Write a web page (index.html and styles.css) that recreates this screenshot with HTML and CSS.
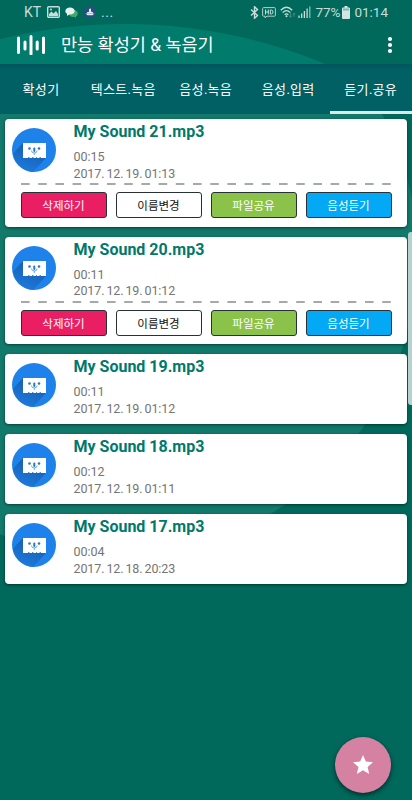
FILE: index.html
```html
<!DOCTYPE html>
<html lang="ko">
<head>
  <meta charset="UTF-8">
  <meta name="viewport" content="width=device-width, initial-scale=1.0">
  <title>만능 확성기 &amp; 녹음기</title>
  <link rel="stylesheet" href="styles.css">
</head>
<body>
  <header class="top">
    <div class="status">
      <span class="carrier">KT</span>
      <svg class="st-photo" width="13" height="12" viewBox="0 0 13 12"><rect x=".7" y=".7" width="11.6" height="10.6" rx="1" fill="none" stroke="#c6ddd9" stroke-width="1.4"/><path d="M2 10V8l2.5-2.5 2 2L9 5l2 3v2z" fill="#c6ddd9"/><circle cx="4" cy="3.4" r="1" fill="#c6ddd9"/></svg>
      <svg class="st-chat" width="13" height="11" viewBox="0 0 13 11"><ellipse cx="8.5" cy="6.5" rx="4.2" ry="3.5" fill="#45a968"/><path d="M9 9l2 2 0-3z" fill="#45a968"/><ellipse cx="5" cy="4" rx="4.7" ry="3.6" fill="#e6f2ed"/><path d="M2 6l0 3 3-2z" fill="#e6f2ed"/></svg>
      <svg class="st-hat" width="12" height="12" viewBox="0 0 12 12"><circle cx="6" cy="6" r="6" fill="#284e7c"/><path d="M5 3l2-.5v3l2 .8v1H3v-1l2-.6zM1.500 7.500h9l-2 1.700h-5z" fill="#dce9ee"/></svg>
      <span class="dots">...</span>
      <div class="status-right">
        <svg class="st-bt" width="9" height="13" viewBox="0 0 9 13"><path d="M1 3.5l6.500 6-3 2.800V.7l3 2.800L1 9.500" fill="none" stroke="#c6ddd9" stroke-width="1.400"/></svg>
        <svg class="st-hd" width="14" height="11" viewBox="0 0 14 11"><path d="M3 9.2H1.6Q.6 9.2.6 8.2V1.6Q.6.6 1.6.6h10.8q1 0 1 1v6.6q0 1-1 1H5L3 10.7z" fill="none" stroke="#b1d0ca"/><path d="M3.5 2.5v5M6.3 2.5v5M3.5 5h2.8M8.3 3v4h1q1.7 0 1.7-2T9.3 3z" fill="none" stroke="#c6ddd9"/></svg>
        <svg class="st-wifi" width="16" height="13" viewBox="0 0 16 13"><path d="M.8 4.3Q6.5-1.8 12.2 4.3M2.7 6.6q3.8-4 7.6 0M4.7 8.7q1.8-1.8 3.6 0" fill="none" stroke="#c6ddd9" stroke-width="1.3"/><circle cx="6.5" cy="10.3" r="1" fill="#c6ddd9"/><path d="M10.5 7v4M9 9.5l1.5 2 1.5-2M14 11V7M12.8 8.5L14 7l1.2 1.5" fill="none" stroke="#4a9287" stroke-width=".8"/></svg>
        <svg class="st-signal" width="13" height="12" viewBox="0 0 13 12"><path d="M1 9.5V12M3.7 7.5V12M6.4 5V12M9.1 2.5V12" stroke="#c6ddd9" stroke-width="1.3"/><path d="M11.800 .5V12" stroke="#91bab3" stroke-width="1.3"/></svg>
        <span class="percent">77%</span>
        <svg class="st-bat" width="8" height="13" viewBox="0 0 8 13"><path d="M2.5 0h3v1.5H7q1 0 1 1V12q0 1-1 1H1q-1 0-1-1V2.5q0-1 1-1h1.5z" fill="#d2e5e2"/><path d="M1 2.5h6v2H1z" fill="#87b5ad"/></svg>
        <span class="clock">01:14</span>
      </div>
    </div>
    <div class="toolbar">
      <svg class="logo" width="30" height="20" viewBox="0 0 30 20"><path d="M1.500 3v14.500M8 7v7M14 1.500v17.500M20.200 7v7M26.500 3v14.500" stroke="#fff" stroke-width="3" stroke-linecap="round"/></svg>
      <h1>만능 확성기 &amp; 녹음기</h1>
      <svg class="menu" width="6" height="18" viewBox="0 0 6 18"><circle cx="3" cy="3" r="2.1" fill="#fff"/><circle cx="3" cy="9" r="2.1" fill="#fff"/><circle cx="3" cy="15" r="2.1" fill="#fff"/></svg>
    </div>
  </header>

  <nav class="tabs">
    <a class="tab">확성기</a>
    <a class="tab">텍스트.녹음</a>
    <a class="tab">음성.녹음</a>
    <a class="tab">음성.입력</a>
    <a class="tab active">듣기.공유</a>
  </nav>

  <main id="soundList"></main>

  <div class="scrollbar"></div>
  <button class="fab" aria-label="favorite">
    <svg width="20" height="20" viewBox="2 2 20 20"><path fill="#fff" d="M12 17.3l6.2 3.7-1.6-7L22 9.2l-7.2-.6L12 2 9.2 8.6 2 9.2 7.5 14l-1.7 7z"/></svg>
  </button>

  <!-- long shadow of the cassette, shared by all discs -->
  <svg class="defs" width="0" height="0">
    <linearGradient id="longShadow" gradientUnits="userSpaceOnUse" x1="20" y1="22" x2="12" y2="41">
      <stop offset="0" stop-color="#1862b4"/>
      <stop offset="1" stop-color="#1c78da"/>
    </linearGradient>
  </svg>

  <template id="cardTemplate">
    <article class="card">
      <div class="info">
        <svg class="disc" width="44" height="44" viewBox="0 0 44 44">
          <circle cx="22" cy="22" r="22" fill="#1e82ea"/>
          <path d="M11 15L1 25.500A22 22 0 0 0 21 44L34 30z" fill="url(#longShadow)"/>
          <rect x="11" y="15" width="23" height="15" fill="#fff"/>
          <circle cx="17.500" cy="20.500" r="1.300" fill="#2878bd"/><circle cx="27" cy="20.500" r="1.300" fill="#2878bd"/>
          <rect x="21.300" y="19.500" width="2" height="4.500" rx="1" fill="#2878bd"/>
          <path d="M19.500 22.500q0 2.500 2.800 2.500t2.800-2.500M22.300 25v2" fill="none" stroke="#4e98d8" stroke-width=".8"/>
          <path d="M16 29.500h1.500M20 29.500h1.500M24 29.500h1M27.500 29.500h1.500" stroke="#2878bd" stroke-width=".8"/>
        </svg>
        <div class="text">
          <h2></h2>
          <p class="length"></p>
          <p class="date"></p>
        </div>
      </div>
    </article>
  </template>

  <template id="actionsTemplate">
    <svg class="dashes" width="370" height="2"><path d="M0 1h370" stroke="#858f8c" stroke-width="1.300" stroke-dasharray="8.600 8.600"/></svg>
    <div class="actions">
      <button class="delete">삭제하기</button>
      <button class="rename">이름변경</button>
      <button class="share">파일공유</button>
      <button class="listen">음성듣기</button>
    </div>
  </template>

  <script>
    const sounds = [
      { name: 'My Sound 21.mp3', length: '00:15', date: '2017. 12. 19. 01:13', open: true },
      { name: 'My Sound 20.mp3', length: '00:11', date: '2017. 12. 19. 01:12', open: true },
      { name: 'My Sound 19.mp3', length: '00:11', date: '2017. 12. 19. 01:12' },
      { name: 'My Sound 18.mp3', length: '00:12', date: '2017. 12. 19. 01:11' },
      { name: 'My Sound 17.mp3', length: '00:04', date: '2017. 12. 18. 20:23' }
    ];

    // Build one card per recording, open cards also get the buttons
    const list = document.getElementById('soundList');
    sounds.forEach(sound => {
      const card = document.getElementById('cardTemplate').content.cloneNode(true).firstElementChild;
      card.querySelector('h2').textContent = sound.name;
      card.querySelector('.length').textContent = sound.length;
      card.querySelector('.date').textContent = sound.date;
      if (sound.open) {
        card.classList.add('open');
        card.appendChild(document.getElementById('actionsTemplate').content.cloneNode(true));
      }
      list.appendChild(card);
    });
  </script>
</body>
</html>
```
FILE: styles.css
```css
* {
  box-sizing: border-box;
}

body {
  margin: 0;
  height: 800px;
  overflow: hidden;
  position: relative;
  font-family: Roboto, "Noto Sans CJK KR", sans-serif;
  background: radial-gradient(circle at 115px 255px, #12796b 301.5px, #00695c 302.5px);
}

h1, h2, p {
  margin: 0;
}

svg {
  display: block;
  flex: none;
}

.defs {
  position: absolute;
}

.top {
  height: 64px;
  background: radial-gradient(circle at 125px 544px, #007b6c 519.5px, #00695c 520.5px);
}

.status {
  height: 24px;
  display: flex;
  align-items: center;
  padding: 0 24px;
  font-size: 14px;
  line-height: 24px;
  color: #c6ddd9;
}

.carrier {
  width: 23px;
}

.st-chat {
  margin-left: 5px;
}

.st-hat {
  margin-left: 6px;
}

.dots {
  margin-left: 5px;
  letter-spacing: 0.5px;
}

.status-right {
  margin-left: auto;
  display: flex;
  align-items: center;
  font-size: 13.5px;
}

.st-hd {
  margin-left: 3px;
}

.st-wifi {
  margin-left: 4px;
}

.st-signal {
  margin-left: 2px;
}

.percent {
  margin-left: 4px;
  width: 24px;
}

.st-bat {
  margin: 0 4px 0 3px;
}

.toolbar {
  height: 40px;
  display: flex;
  align-items: center;
  padding: 1px 19px 0 17px;
}

.toolbar h1 {
  flex: 1;
  margin-left: 14px;
  font-size: 17.5px;
  line-height: 26px;
  font-weight: 400;
  color: #fff;
  white-space: nowrap;
}

.tabs {
  height: 50px;
  display: grid;
  grid-template-columns: 82px repeat(4, 82.5px);
  background: linear-gradient(#00555a, #006064 6px);
}

.tab {
  display: flex;
  align-items: center;
  justify-content: center;
  padding-top: 2px;
  font-size: 13px;
  letter-spacing: 0.3px;
  color: #fff;
  border-bottom: 3px solid transparent;
  white-space: nowrap;
}

.tab.active {
  border-bottom-color: #d8ebe9;
}

#soundList {
  display: flex;
  flex-direction: column;
  gap: 10px;
  padding: 5px 5px 0;
}

.card {
  height: 70px;
  background: #fff;
  border-radius: 4px;
  box-shadow: 0 1px 3px rgba(0, 0, 0, 0.5);
}

.card.open {
  height: 107.5px;
}

.info {
  display: flex;
  height: 64px;
  padding: 0 7px;
}

.disc {
  margin-top: 9px;
}

.text {
  margin-left: 17.5px;
  color: #757575;
  font-size: 12.5px;
  line-height: 16.5px;
}

.text h2 {
  height: 30px;
  font-size: 16px;
  line-height: 25px;
  font-weight: 700;
  color: #00796b;
}

.text .date {
  word-spacing: -1px;
  letter-spacing: -0.1px;
}

.dashes {
  margin-left: 16px;
}

.actions {
  display: grid;
  grid-template-columns: repeat(4, 1fr);
  gap: 9px;
  margin: 7px 15.5px 0;
}

.actions button {
  height: 26px;
  padding: 0;
  font-family: inherit;
  font-size: 11.5px;
  color: #fff;
  border: 1px solid #263238;
  border-radius: 3px;
}

.actions .delete {
  background: #e91e63;
}

.actions .rename {
  background: #fff;
  color: #111;
}

.actions .share {
  background: #8bc34a;
}

.actions .listen {
  background: #03a9f4;
}

.scrollbar {
  position: absolute;
  right: 0;
  top: 232px;
  width: 4px;
  height: 173px;
  background: #b5d2ce;
  border-radius: 3px 0 0 3px;
}

.fab {
  position: absolute;
  right: 21px;
  bottom: 7px;
  width: 56px;
  height: 56px;
  padding: 0;
  display: flex;
  align-items: center;
  justify-content: center;
  border: none;
  border-radius: 50%;
  background: #d481a2;
  box-shadow: 0 2px 5px rgba(0, 0, 0, 0.6);
}
```
